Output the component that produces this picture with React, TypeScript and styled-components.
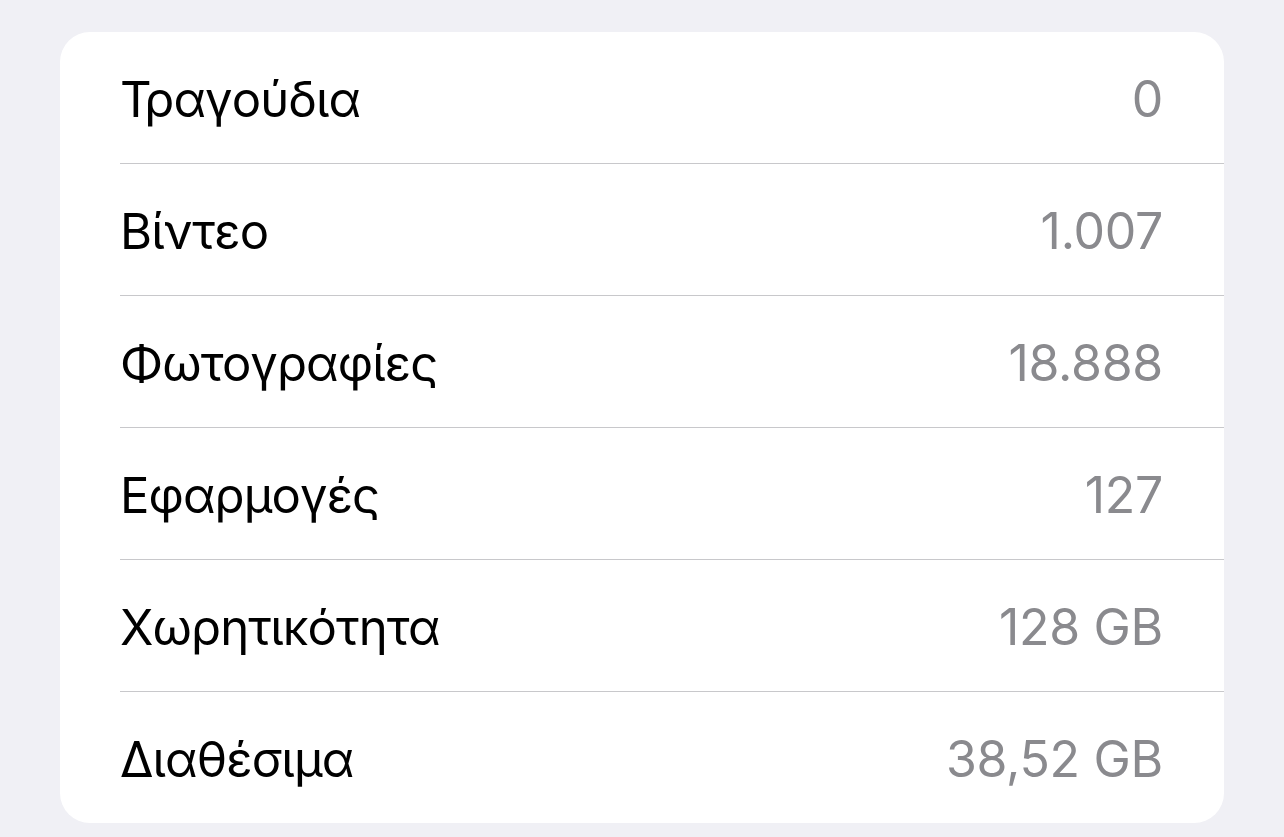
import React from "react";
import styled, { createGlobalStyle } from "styled-components";

const GlobalStyle = createGlobalStyle`
  html, body {
    margin: 0;
    padding: 0;
    background: #f0f0f5;
  }
  body {
    font-family: Inter, "Noto Sans", "Liberation Sans", sans-serif;
    -webkit-font-smoothing: antialiased;
  }
`;

const Page = styled.div`
  width: 1284px;
  height: 837px;
  box-sizing: border-box;
  padding: 32px 60px 0 60px;
  background: #f0f0f5;
`;

const Card = styled.div`
  background: #ffffff;
  border-radius: 30px;
  overflow: hidden;
`;

const Row = styled.div`
  display: flex;
  align-items: center;
  justify-content: space-between;
  height: 131px;
  margin-left: 60px;
  padding-right: 61px;
  border-top: 1px solid #c8c8cb;

  &:first-child {
    border-top: none;
  }
`;

const Label = styled.span`
  font-size: 49px;
  line-height: 1;
  padding-top: 3px;
  color: #000000;
  letter-spacing: -0.9px;
`;

const Value = styled.span`
  font-size: 50px;
  line-height: 1;
  padding-top: 3px;
  color: #8a8a8e;
  letter-spacing: -0.3px;
`;

const rows: [string, string][] = [
  ["Τραγούδια", "0"],
  ["Βίντεο", "1.007"],
  ["Φωτογραφίες", "18.888"],
  ["Εφαρμογές", "127"],
  ["Χωρητικότητα", "128 GB"],
  ["Διαθέσιμα", "38,52 GB"],
];

export default function App() {
  return (
    <>
      <GlobalStyle />
      <Page>
        <Card>
          {rows.map(([label, value]) => (
            <Row key={label}>
              <Label>{label}</Label>
              <Value>{value}</Value>
            </Row>
          ))}
        </Card>
      </Page>
    </>
  );
}
